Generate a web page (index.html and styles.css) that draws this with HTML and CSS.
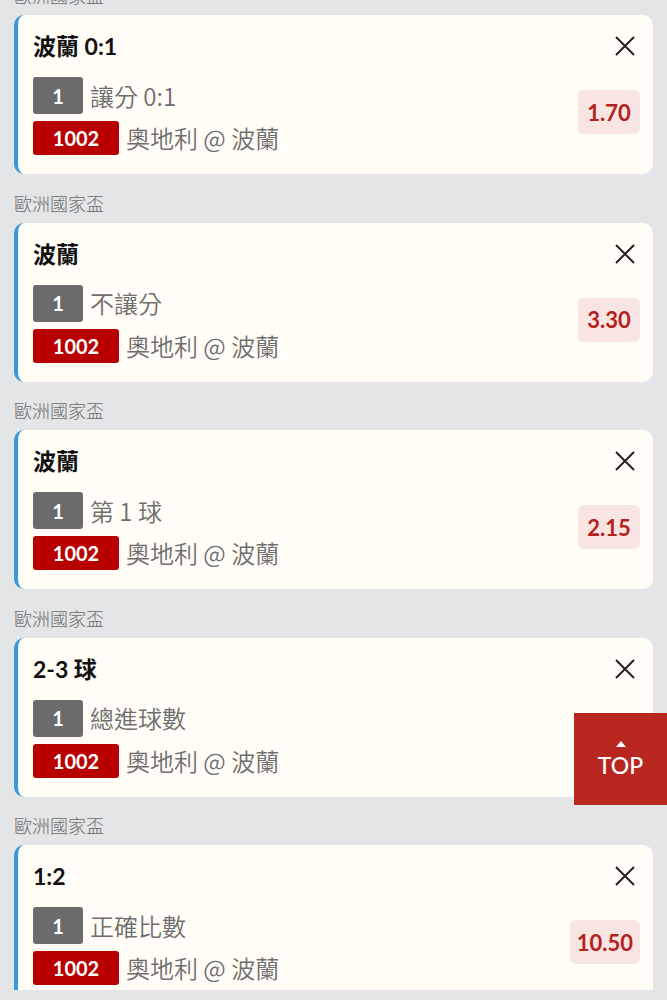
FILE: index.html
```html
<!DOCTYPE html>
<html lang="zh-Hant">
<head>
<meta charset="utf-8">
<title>Bet slip</title>
<link rel="stylesheet" href="styles.css">
</head>
<body>
<div class="viewport">
  <div class="list">
    <section class="group">
      <div class="league">歐洲國家盃</div>
      <div class="card">
        <div class="card-head">
          <div class="title">波蘭 0:1</div>
          <button class="close" aria-label="close"><svg viewBox="0 0 22 22" width="22" height="22"><path d="M2 2 L20 20 M20 2 L2 20" /></svg></button>
        </div>
        <div class="card-body">
          <div class="rows">
            <div class="row"><span class="tag tag-grey">1</span><span class="txt">讓分 0:1</span></div>
            <div class="row"><span class="tag tag-red">1002</span><span class="txt">奧地利 @ 波蘭</span></div>
          </div>
          <div class="odds">1.70</div>
        </div>
      </div>
    </section>
    <section class="group">
      <div class="league">歐洲國家盃</div>
      <div class="card">
        <div class="card-head">
          <div class="title">波蘭</div>
          <button class="close" aria-label="close"><svg viewBox="0 0 22 22" width="22" height="22"><path d="M2 2 L20 20 M20 2 L2 20" /></svg></button>
        </div>
        <div class="card-body">
          <div class="rows">
            <div class="row"><span class="tag tag-grey">1</span><span class="txt">不讓分</span></div>
            <div class="row"><span class="tag tag-red">1002</span><span class="txt">奧地利 @ 波蘭</span></div>
          </div>
          <div class="odds">3.30</div>
        </div>
      </div>
    </section>
    <section class="group">
      <div class="league">歐洲國家盃</div>
      <div class="card">
        <div class="card-head">
          <div class="title">波蘭</div>
          <button class="close" aria-label="close"><svg viewBox="0 0 22 22" width="22" height="22"><path d="M2 2 L20 20 M20 2 L2 20" /></svg></button>
        </div>
        <div class="card-body">
          <div class="rows">
            <div class="row"><span class="tag tag-grey">1</span><span class="txt">第 1 球</span></div>
            <div class="row"><span class="tag tag-red">1002</span><span class="txt">奧地利 @ 波蘭</span></div>
          </div>
          <div class="odds">2.15</div>
        </div>
      </div>
    </section>
    <section class="group">
      <div class="league">歐洲國家盃</div>
      <div class="card">
        <div class="card-head">
          <div class="title">2-3 球</div>
          <button class="close" aria-label="close"><svg viewBox="0 0 22 22" width="22" height="22"><path d="M2 2 L20 20 M20 2 L2 20" /></svg></button>
        </div>
        <div class="card-body">
          <div class="rows">
            <div class="row"><span class="tag tag-grey">1</span><span class="txt">總進球數</span></div>
            <div class="row"><span class="tag tag-red">1002</span><span class="txt">奧地利 @ 波蘭</span></div>
          </div>
          <div class="odds">3.20</div>
        </div>
      </div>
    </section>
    <section class="group">
      <div class="league">歐洲國家盃</div>
      <div class="card">
        <div class="card-head">
          <div class="title">1:2</div>
          <button class="close" aria-label="close"><svg viewBox="0 0 22 22" width="22" height="22"><path d="M2 2 L20 20 M20 2 L2 20" /></svg></button>
        </div>
        <div class="card-body">
          <div class="rows">
            <div class="row"><span class="tag tag-grey">1</span><span class="txt">正確比數</span></div>
            <div class="row"><span class="tag tag-red">1002</span><span class="txt">奧地利 @ 波蘭</span></div>
          </div>
          <div class="odds">10.50</div>
        </div>
      </div>
    </section>
  </div>
</div>
<a class="top-btn" href="#"><span class="top-arrow"></span><span class="top-label">TOP</span></a>
</body>
</html>
```

FILE: styles.css
```css
html, body {
  margin: 0;
  padding: 0;
}
body {
  background: #e4e5e7;
  font-family: Lato, "Noto Sans CJK TC", sans-serif;
  color: #222;
}
.viewport {
  height: 990px;
  overflow: hidden;
}
.list {
  margin-top: -33.5px;
  padding: 0 14px;
}
.league {
  padding: 18.5px 0 10px;
  line-height: 20px;
  font-size: 18px;
  color: #6a6a6a;
  font-family: "Noto Sans CJK TC", sans-serif;
  font-weight: 300;
}
.card {
  background: #fffdf5;
  border-left: 4px solid #3b98da;
  border-radius: 10px;
  padding: 17px 13px 19px 15px;
}
.card-head {
  display: flex;
  align-items: center;
  justify-content: space-between;
  height: 28px;
}
.title {
  font-size: 23px;
  font-weight: 700;
  color: #111;
  line-height: 28px;
}
.close {
  border: 0;
  background: none;
  padding: 0;
  margin-right: 4px;
  width: 22px;
  height: 22px;
  display: flex;
}
.close path {
  stroke: #222;
  stroke-width: 2;
  fill: none;
}
.card-body {
  margin-top: 17px;
  display: flex;
  align-items: center;
  justify-content: space-between;
}
.rows {
  display: flex;
  flex-direction: column;
  gap: 7px;
}
.row {
  display: flex;
  align-items: center;
  gap: 7px;
}
.tag {
  display: inline-flex;
  align-items: center;
  justify-content: center;
  color: #fff;
  font-weight: 700;
  font-size: 20px;
  border-radius: 3px;
}
.tag-grey {
  background: #6b6b6b;
  width: 50px;
  height: 37px;
}
.tag-red {
  background: #b80000;
  width: 86px;
  height: 34px;
}
.txt {
  font-family: "Noto Sans CJK TC", sans-serif;
  font-size: 24px;
  color: #6e6e6e;
  font-weight: 350;
  line-height: 30px;
}
.odds {
  margin-bottom: 8px;
  background: #f8e4e0;
  color: #b3221e;
  font-weight: 700;
  font-size: 22px;
  height: 44px;
  min-width: 62px;
  padding: 0 7px;
  box-sizing: border-box;
  border-radius: 6px;
  display: flex;
  align-items: center;
  justify-content: center;
}
.top-btn {
  position: fixed;
  right: 0;
  top: 713px;
  width: 93px;
  height: 92px;
  background: #b8271f;
  color: #fff;
  text-decoration: none;
  display: flex;
  flex-direction: column;
  align-items: center;
  justify-content: center;
  gap: 6px;
}
.top-arrow {
  width: 0;
  height: 0;
  border-left: 5px solid transparent;
  border-right: 5px solid transparent;
  border-bottom: 6px solid #fff;
}
.top-label {
  font-size: 23px;
  font-weight: 500;
  line-height: 24px;
}
```
